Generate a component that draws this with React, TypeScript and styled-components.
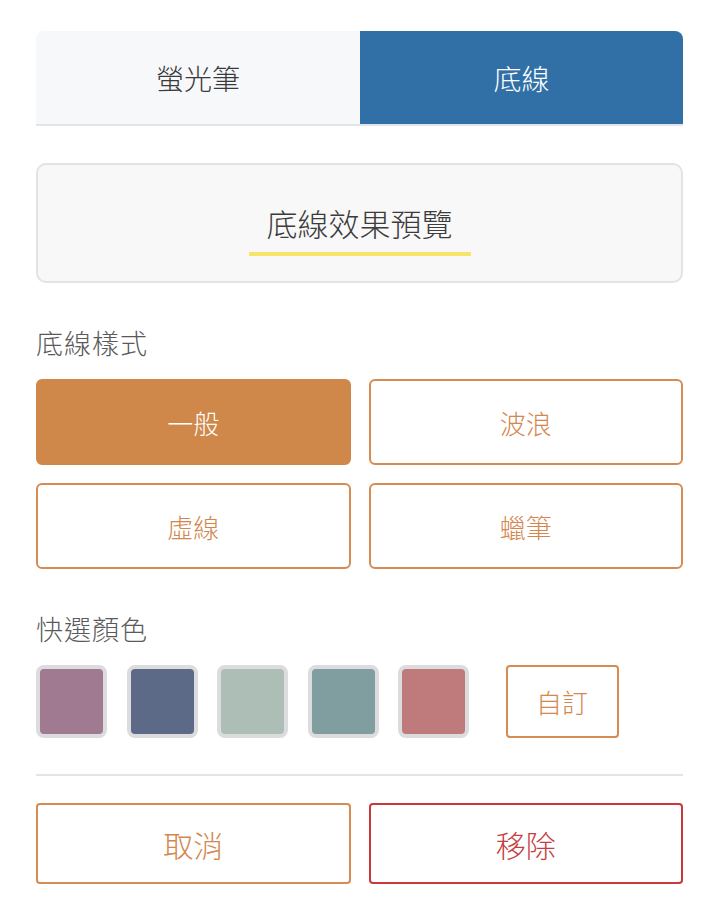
import * as React from 'react';
import { useState } from 'react';
import styled, { createGlobalStyle } from 'styled-components';

const Global = createGlobalStyle`
  body {
    margin: 0;
    background: #ffffff;
    font-family: "Noto Sans CJK TC", "Noto Sans", sans-serif;
    font-weight: 300;
  }
`;

const Panel = styled.div`
  width: 647px;
  padding: 31px 0 0 36px;
`;

const Tabs = styled.div`
  display: grid;
  grid-template-columns: 324px 323px;
  border-bottom: 2px solid #e3e4e6;
`;

const Tab = styled.button<{ $active?: boolean }>`
  height: 93px;
  border: none;
  margin: 0;
  font-family: inherit;
  font-weight: 300;
  font-size: 28px;
  color: ${p => (p.$active ? '#ffffff' : '#3a3a3a')};
  background: ${p => (p.$active ? '#3070a6' : '#f7f8fa')};
  border-radius: ${p => (p.$active ? '0 8px 0 0' : '8px 0 0 0')};
  cursor: pointer;
`;

const Preview = styled.div`
  margin-top: 37px;
  height: 116px;
  border: 2px solid #e3e3e3;
  border-radius: 10px;
  background: #f8f8f8;
  display: flex;
  align-items: center;
  justify-content: center;
`;

const PreviewText = styled.span`
  font-size: 31px;
  color: #3c3c3c;
  padding: 0 18px 8px;
  margin-top: 12px;
  line-height: 42px;
  border-bottom: 4px solid #f8e46a;
`;

const Label = styled.div`
  margin-top: 40px;
  height: 40px;
  line-height: 40px;
  font-size: 27px;
  letter-spacing: 1px;
  color: #5a5a5a;
`;

const Grid = styled.div`
  margin-top: 16px;
  display: grid;
  grid-template-columns: 1fr 1fr;
  gap: 18px;
`;

const StyleButton = styled.button<{ $active?: boolean }>`
  height: 86px;
  margin: 0;
  font-family: inherit;
  font-weight: 300;
  font-size: 26px;
  border-radius: 6px;
  border: 2px solid ${p => (p.$active ? '#d0874a' : '#d58b52')};
  background: ${p => (p.$active ? '#d0874a' : '#ffffff')};
  color: ${p => (p.$active ? '#ffffff' : '#d3874e')};
  cursor: pointer;
`;

const Swatches = styled.div`
  margin-top: 16px;
  display: flex;
  align-items: center;
  gap: 19.5px;
`;

const Swatch = styled.button<{ $color: string }>`
  width: 71px;
  height: 73px;
  margin: 0;
  padding: 0;
  border: 4px solid #dcdcde;
  border-radius: 8px;
  background: ${p => p.$color};
  cursor: pointer;
`;

const CustomButton = styled.button`
  margin-left: 17px;
  width: 113px;
  height: 73px;
  border: 2px solid #d58b52;
  border-radius: 4px;
  background: #ffffff;
  color: #d3874e;
  font-family: inherit;
  font-weight: 300;
  font-size: 26px;
  cursor: pointer;
`;

const Divider = styled.div`
  margin-top: 36px;
  height: 2px;
  background: #e4e4e4;
`;

const Actions = styled.div`
  margin-top: 27px;
  display: grid;
  grid-template-columns: 1fr 1fr;
  gap: 18px;
`;

const ActionButton = styled.button<{ $tone: 'cancel' | 'danger' }>`
  height: 81px;
  margin: 0;
  font-family: inherit;
  font-weight: 300;
  font-size: 30px;
  border-radius: 4px;
  background: #ffffff;
  border: 2px solid ${p => (p.$tone === 'danger' ? '#c9393c' : '#d58b52')};
  color: ${p => (p.$tone === 'danger' ? '#c4403f' : '#d3874e')};
  cursor: pointer;
`;

const styles = ['一般', '波浪', '虛線', '蠟筆'];
const colors = ['#a07a90', '#5c6987', '#acbeb5', '#809ea0', '#bf7b7b'];

export default function App() {
  const [tab, setTab] = useState(1);
  const [style, setStyle] = useState(0);

  return (
    <>
      <Global />
      <Panel>
        <Tabs>
          <Tab $active={tab === 0} onClick={() => setTab(0)}>
            螢光筆
          </Tab>
          <Tab $active={tab === 1} onClick={() => setTab(1)}>
            底線
          </Tab>
        </Tabs>
        <Preview>
          <PreviewText>底線效果預覽</PreviewText>
        </Preview>
        <Label>底線樣式</Label>
        <Grid>
          {styles.map((s, i) => (
            <StyleButton key={s} $active={style === i} onClick={() => setStyle(i)}>
              {s}
            </StyleButton>
          ))}
        </Grid>
        <Label>快選顏色</Label>
        <Swatches>
          {colors.map(c => (
            <Swatch key={c} $color={c} />
          ))}
          <CustomButton>自訂</CustomButton>
        </Swatches>
        <Divider />
        <Actions>
          <ActionButton $tone="cancel">取消</ActionButton>
          <ActionButton $tone="danger">移除</ActionButton>
        </Actions>
      </Panel>
    </>
  );
}
